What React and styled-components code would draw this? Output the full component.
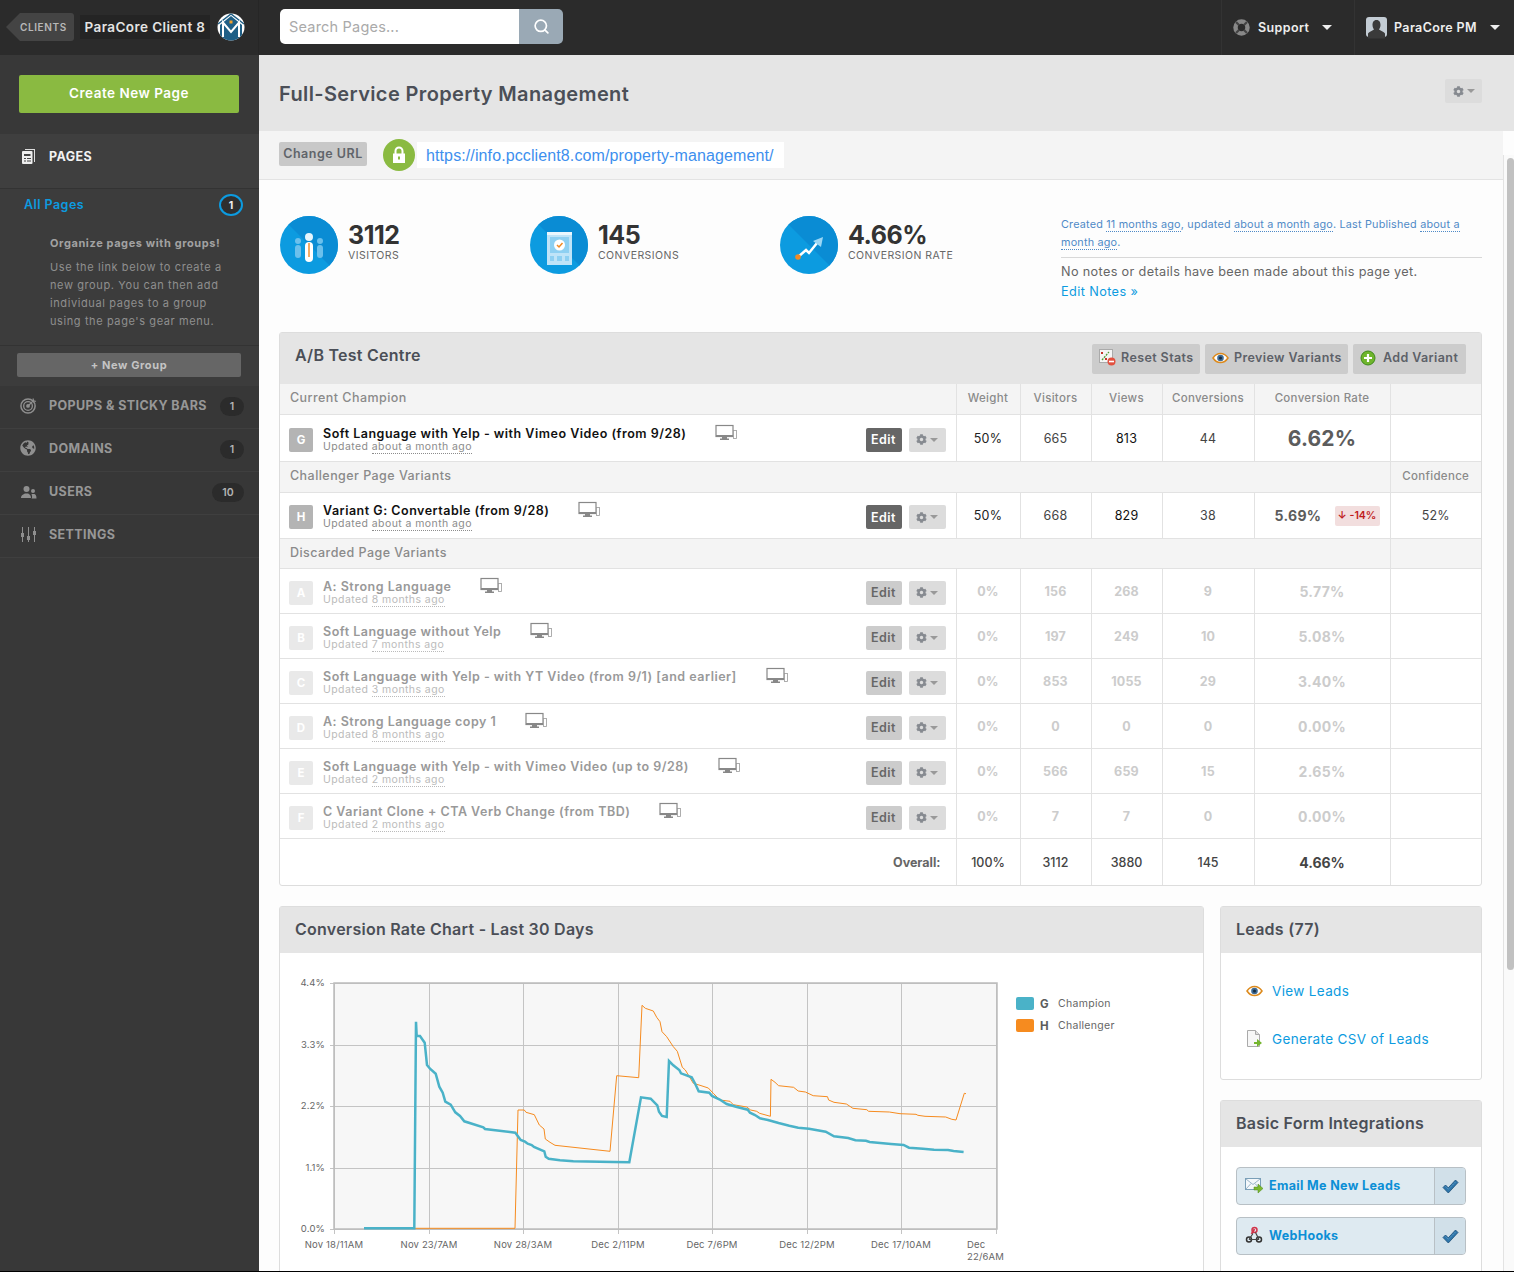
import React from "react";
import styled, { createGlobalStyle } from "styled-components";
import { FaCog, FaGlobeAmericas } from "react-icons/fa";
import { Search } from "lucide-react";

const FONT = `Inter, "Open Sans", "Liberation Sans", sans-serif`;

const GlobalStyle = createGlobalStyle`
  html, body {
    margin: 0;
    height: 1272px;
    overflow: hidden;
    background: #000;
    font-family: ${FONT};
  }
  #root { height: 1271px; overflow: hidden; }
  * { box-sizing: border-box; }
`;

const Page = styled.div`
  height: 1271px;
  display: flex;
  flex-direction: column;
  background: #fdfdfd;
`;

/* top bar */
const TopBar = styled.header`
  height: 55px;
  flex: none;
  display: flex;
  align-items: center;
  background: #2b2b2b;
  color: #fff;
`;
const Brand = styled.div`
  width: 259px;
  height: 100%;
  flex: none;
  display: flex;
  align-items: center;
  padding-left: 6px;
  border-right: 1px solid #262626;
`;
const ClientsTag = styled.div`
  width: 68px;
  height: 28px;
  margin-top: -1px;
  padding-left: 14px;
  display: flex;
  align-items: center;
  background: #444;
  border-radius: 0 3px 3px 0;
  color: #b8b8b8;
  font-size: 10px;
  font-weight: 600;
  letter-spacing: 0.6px;
  clip-path: polygon(14px 0, 100% 0, 100% 100%, 14px 100%, 0 50%);
`;
const ClientName = styled.div`
  margin-left: 6px;
  width: 130px;
  height: 24px;
  margin-top: -1px;
  display: flex;
  align-items: center;
  justify-content: center;
  background: #242424;
  font-size: 13.5px;
  font-weight: 600;
  letter-spacing: 0.4px;
  color: #e4e4e4;
  white-space: nowrap;
`;
const BrandLogo = styled.svg`
  width: 28px;
  height: 28px;
  margin-left: 7px;
  margin-top: -1px;
`;
const SearchBox = styled.div`
  margin-left: 21px;
  margin-top: -2px;
  width: 283px;
  height: 35px;
  display: flex;
  border-radius: 5px;
  overflow: hidden;
`;
const SearchField = styled.div`
  flex: 1;
  display: flex;
  align-items: center;
  padding-left: 9px;
  background: #fff;
  color: #aaa;
  font-size: 14.5px;
  letter-spacing: 0.2px;
`;
const SearchButton = styled.div`
  width: 44px;
  display: flex;
  align-items: center;
  justify-content: center;
  background: #9aa9b5;
  color: #fff;
`;
const TopMenu = styled.div`
  height: 100%;
  display: flex;
  align-items: center;
  border-left: 1px solid #333;
  padding-left: ${({ $pad }) => $pad}px;
  width: ${({ $w }) => $w}px;
  font-size: 12.5px;
  font-weight: 600;
  letter-spacing: 0.38px;
  color: #eee;
  margin-left: ${({ $push }) => ($push ? "auto" : "0")};
`;
const MenuLabel = styled.span`
  margin-left: ${({ $gap }) => $gap}px;
`;
const MenuCaret = styled.span`
  margin-left: ${({ $gap }) => $gap}px;
  border-left: 5px solid transparent;
  border-right: 5px solid transparent;
  border-top: 5px solid #eee;
`;

/* layout */
const Body = styled.div`
  flex: 1;
  min-height: 0;
  display: flex;
`;
const Sidebar = styled.aside`
  width: 259px;
  flex: none;
  background: #383838;
  display: flex;
  flex-direction: column;
`;
const Main = styled.main`
  flex: 1;
  min-width: 0;
  display: flex;
  flex-direction: column;
`;

/* sidebar */
const CreateArea = styled.div`
  height: 79px;
  padding: 20px 20px 0 19px;
`;
const CreateButton = styled.div`
  height: 38px;
  border-radius: 2px;
  background: #8aba41;
  color: #fff;
  display: flex;
  align-items: center;
  justify-content: center;
  padding-bottom: 2px;
  font-size: 13.5px;
  font-weight: 600;
  letter-spacing: 0.5px;
`;
const PagesHead = styled.div`
  height: 55px;
  background: #3f3f3f;
  border-bottom: 1px solid #333;
  display: flex;
  align-items: center;
  padding: 0 0 9px 20px;
  color: #f2f2f2;
  font-size: 12.5px;
  font-weight: 700;
  letter-spacing: 0.4px;
`;
const NavIcon = styled.svg`
  width: 17px;
  height: 17px;
  flex: none;
  margin-right: ${({ $gap }) => $gap || 12}px;
`;
const GlobeSlot = styled.span`
  width: 17px;
  height: 17px;
  flex: none;
  margin-right: 12px;
  color: #8f8f8f;
  font-size: 16px;
  line-height: 16px;
`;
const GroupSection = styled.div`
  height: 157px;
  background: #3c3c3c;
  border-bottom: 1px solid #333;
  position: relative;
  padding: 8px 0 0 24px;
`;
const AllPages = styled.div`
  color: #0c9be0;
  font-size: 12.5px;
  font-weight: 600;
  letter-spacing: 0.45px;
`;
const Ring = styled.div`
  position: absolute;
  top: 5px;
  right: 16px;
  width: 24px;
  height: 22px;
  border: 2px solid #0c9be0;
  border-radius: 50%;
  background: #2f2f2f;
  color: #eee;
  font-size: 10.5px;
  font-weight: 700;
  display: flex;
  align-items: center;
  justify-content: center;
`;
const HintTitle = styled.div`
  margin: 24px 0 0 26px;
  font-size: 11px;
  font-weight: 700;
  letter-spacing: 0.6px;
  color: #a2a2a2;
  white-space: nowrap;
`;
const HintText = styled.div`
  margin: 8px 0 0 26px;
  font-size: 11px;
  line-height: 18px;
  color: #8f8f8f;
  letter-spacing: 0.6px;
  white-space: nowrap;
`;
const NewGroupArea = styled.div`
  height: 40px;
  padding: 7px 18px 0 17px;
  background: #3c3c3c;
`;
const NewGroupButton = styled.div`
  height: 24px;
  border-radius: 2px;
  background: #666;
  color: #c4c4c4;
  display: flex;
  align-items: center;
  justify-content: center;
  font-size: 11px;
  font-weight: 700;
  letter-spacing: 0.6px;
`;
const NavRow = styled.div`
  height: 43px;
  flex: none;
  display: flex;
  align-items: center;
  padding: 0 15px 3px 20px;
  border-bottom: 1px solid #3f3f3f;
  background: #373737;
  color: #979797;
  font-size: 12.5px;
  font-weight: 700;
  letter-spacing: 0.4px;
`;
const NavCount = styled.span`
  margin-left: auto;
  margin-bottom: -2px;
  min-width: ${({ $wide }) => ($wide ? 32 : 24)}px;
  height: 19px;
  border-radius: 10px;
  background: #2b2b2b;
  color: #b4b4b4;
  font-size: 10.5px;
  font-weight: 600;
  letter-spacing: 0;
  display: flex;
  align-items: center;
  justify-content: center;
`;

/* page head */
const TitleBar = styled.div`
  height: 76px;
  flex: none;
  display: flex;
  align-items: center;
  justify-content: space-between;
  padding: 0 32px 0 20px;
  background: #e5e5e5;
`;
const PageTitle = styled.h1`
  margin: 2px 0 0;
  font-size: 20px;
  font-weight: 600;
  color: #4b4f57;
  letter-spacing: 0.37px;
`;
const GearButton = styled.div`
  width: ${({ $w }) => $w}px;
  height: 24px;
  flex: none;
  border-radius: 2px;
  background: ${({ $bg }) => $bg};
  color: #868a90;
  display: flex;
  align-items: center;
  justify-content: center;
  gap: 3px;
  font-size: 11px;
`;
const TitleGear = styled(GearButton)`
  margin-top: -4px;
`;
const SmallCaret = styled.span`
  border-left: 4px solid transparent;
  border-right: 4px solid transparent;
  border-top: 4px solid #999;
`;
const ContentRow = styled.div`
  flex: 1;
  min-height: 0;
  display: flex;
`;
const Content = styled.div`
  flex: 1;
  min-width: 0;
  overflow: hidden;
`;
const Scrollbar = styled.div`
  width: 11px;
  flex: none;
  margin-top: 24px;
  padding: 3px 0 0 3px;
  border-left: 1px solid #e3e3e3;
  background: #fafafa;
`;
const ScrollThumb = styled.div`
  height: 812px;
  border-radius: 4px;
  background: #c1c1c1;
`;
const UrlBar = styled.div`
  height: 49px;
  display: flex;
  align-items: center;
  padding: 0 0 1px 20px;
  background: #f4f4f4;
  border-bottom: 1px solid #e3e3e3;
`;
const ChangeUrl = styled.div`
  width: 88px;
  height: 24px;
  margin-top: -2px;
  border-radius: 2px;
  background: #c8c8c8;
  color: #60646a;
  display: flex;
  align-items: center;
  justify-content: center;
  font-size: 12.5px;
  font-weight: 600;
  letter-spacing: 0.5px;
`;
const LockCircle = styled.div`
  width: 32px;
  height: 32px;
  margin-left: 16px;
  border-radius: 50%;
  background: #8aba41;
  display: flex;
  align-items: center;
  justify-content: center;
`;
const UrlLink = styled.div`
  height: 26px;
  margin-left: 2px;
  padding: 3px 10px 0 9px;
  display: flex;
  align-items: center;
  background: #fff;
  color: #3d8fee;
  font-family: "Liberation Sans", sans-serif;
  font-size: 16px;
  letter-spacing: 0.11px;
`;

/* stats */
const StatsRow = styled.section`
  display: flex;
  padding: 36px 21px 0 21px;
  height: 152px;
`;
const Stat = styled.div`
  width: 250px;
  display: flex;
  flex: none;
`;
const StatIcon = styled.svg`
  width: 58px;
  height: 58px;
  flex: none;
`;
const StatText = styled.div`
  margin-left: 10px;
`;
const StatNumber = styled.div`
  font-size: 25px;
  line-height: 30px;
  margin-top: 4px;
  font-weight: 700;
  color: #333;
  letter-spacing: -0.5px;
`;
const StatLabel = styled.div`
  font-size: 10.5px;
  color: #666;
  margin-top: -1px;
  letter-spacing: 0.45px;
`;
const MetaBox = styled.div`
  flex: 1;
  margin-left: 31px;
`;
const MetaLine = styled.div`
  font-size: 10.8px;
  line-height: 18px;
  color: #4f8ac7;
  padding-bottom: 5px;
  border-bottom: 1px solid #d8d8d8;
  letter-spacing: 0.2px;
`;
const Abbr = styled.span`
  border-bottom: 1px dotted currentColor;
`;
const NoteLine = styled.div`
  margin-top: 5px;
  font-size: 12.7px;
  line-height: 18px;
  color: #666;
  letter-spacing: 0.34px;
`;
const NotesLink = styled.div`
  margin-top: 2px;
  font-size: 12.7px;
  line-height: 18px;
  color: #0c9be0;
  letter-spacing: 0.4px;
`;

/* panels */
const Panel = styled.section`
  border: 1px solid #ddd;
  border-radius: 3px;
  background: #fff;
`;
const TestPanel = styled(Panel)`
  margin: 0 21px 0 20px;
`;
const PanelHead = styled.div`
  height: ${({ $h }) => $h || 46}px;
  display: flex;
  align-items: center;
  padding: 0 15px;
  background: #e5e5e5;
`;
const PanelTitle = styled.h2`
  margin: 0;
  font-size: 16px;
  font-weight: 600;
  color: #4b4f57;
  letter-spacing: 0.25px;
  padding-bottom: ${({ $lift }) => $lift || 3}px;
`;
const HeadActions = styled.div`
  margin-left: auto;
  display: flex;
  gap: 5px;
  padding-top: 1px;
`;
const HeadButton = styled.div`
  height: 30px;
  width: ${({ $w }) => $w}px;
  border-radius: 2px;
  background: #ccc;
  color: #5d6168;
  display: flex;
  align-items: center;
  gap: ${({ $gap }) => $gap}px;
  padding: 0 0 3px 7px;
  font-size: 12.5px;
  font-weight: 600;
  letter-spacing: 0.4px;
`;
const Table = styled.table`
  width: 1201px;
  table-layout: fixed;
  border-collapse: collapse;
`;
const HeadCell = styled.td`
  height: ${({ $h }) => $h || 31}px;
  padding: 0 0 2px;
  background: #f4f4f4;
  border-bottom: 1px solid #e2e2e2;
  border-left: ${({ $first }) => ($first ? "0" : "1px solid #e2e2e2")};
  color: #8a8a8a;
  font-weight: 500;
  text-align: ${({ $first }) => ($first ? "left" : "center")};
  padding-left: ${({ $first }) => ($first ? "10px" : "0")};
  font-size: ${({ $first }) => ($first ? "12.5px" : "11.5px")};
  letter-spacing: ${({ $first }) => ($first ? "0.45px" : "0.3px")};
`;
const ValueCell = styled.td`
  height: ${({ $h }) => $h}px;
  padding: 1px 0 0;
  border-bottom: 1px solid #e2e2e2;
  border-left: 1px solid #e2e2e2;
  text-align: center;
  font-size: 12.5px;
  letter-spacing: 0.2px;
  font-weight: ${({ $dim }) => ($dim ? 700 : 400)};
  color: ${({ $dim, $c }) => ($dim ? "#ccc" : $c || "#444")};
`;
const NameCell = styled.td`
  padding: 4px 10px 0 9px;
  border-bottom: 1px solid #e2e2e2;
`;
const NameWrap = styled.div`
  display: flex;
  align-items: center;
`;
const Letter = styled.div`
  width: 24px;
  height: 24px;
  flex: none;
  border-radius: 2px;
  background: ${({ $dim }) => ($dim ? "#e9e9e9" : "#b4b4b4")};
  color: #fff;
  font-size: 11.5px;
  font-weight: 700;
  display: flex;
  align-items: center;
  justify-content: center;
`;
const NameText = styled.div`
  margin-left: 10px;
  display: flex;
  flex-direction: column;
`;
const VariantTitle = styled.div`
  font-size: 12.5px;
  line-height: 14px;
  font-weight: 600;
  letter-spacing: 0.5px;
  color: ${({ $dim }) => ($dim ? "#999" : "#111")};
  white-space: nowrap;
`;
const Updated = styled.div`
  font-size: 10.5px;
  line-height: 12px;
  letter-spacing: 0.42px;
  color: ${({ $dim }) => ($dim ? "#bbb" : "#8c8c8c")};
`;
const Device = styled.svg`
  width: 22px;
  height: 18px;
  flex: none;
  margin-left: 29px;
  margin-top: -14px;
`;
const EditButton = styled.div`
  margin-left: auto;
  width: 36px;
  height: 24px;
  border-radius: 2px;
  background: ${({ $dim }) => ($dim ? "#ccc" : "#666")};
  color: ${({ $dim }) => ($dim ? "#666" : "#fff")};
  font-size: 12.5px;
  font-weight: 600;
  letter-spacing: 0.5px;
  display: flex;
  align-items: center;
  justify-content: center;
`;
const RowGear = styled(GearButton)`
  margin-left: 7px;
  width: 37px;
`;
const BigRate = styled.span`
  font-size: 21px;
  font-weight: 700;
  color: #5c5c5c;
`;
const Rate = styled.span`
  font-size: 14px;
  font-weight: 700;
  letter-spacing: 0.3px;
  color: ${({ $dim }) => ($dim ? "#ccc" : "#5c5c5c")};
`;
const RateWrap = styled.div`
  display: flex;
  align-items: center;
  padding-left: 20px;
`;
const DropBadge = styled.span`
  margin-left: auto;
  margin-right: 10px;
  width: 45px;
  height: 20px;
  border-radius: 2px;
  background: #f2dede;
  color: #c01a1a;
  font-size: 10.5px;
  font-weight: 600;
  letter-spacing: 0;
  display: flex;
  align-items: center;
  justify-content: center;
`;
const OverallLabel = styled.td`
  text-align: right;
  padding: 2px 15px 0 0;
  font-size: 12.5px;
  font-weight: 700;
  color: #666;
`;
const OverallCell = styled.td`
  height: 47px;
  padding: 2px 0 0;
  border-left: 1px solid #e2e2e2;
  text-align: center;
  font-weight: ${({ $bold }) => ($bold ? 700 : 500)};
  font-size: ${({ $bold }) => ($bold ? "14px" : "12.5px")};
  color: #444;
`;

/* lower area */
const Lower = styled.div`
  display: grid;
  grid-template-columns: 925px 262px;
  column-gap: 16px;
  margin: 20px 21px 0 20px;
  align-items: start;
`;
const ChartBody = styled.div`
  display: flex;
  padding: 17px 0 0 10px;
  height: 330px;
`;
const ChartSvg = styled.svg`
  width: 720px;
  height: 310px;
  flex: none;
  overflow: visible;
`;
const ChartLabels = styled.g`
  font-family: ${FONT};
  font-size: 9.5px;
  letter-spacing: 0.15px;
  fill: #666;
`;
const Legend = styled.div`
  margin: 27px 0 0 6px;
  display: flex;
  flex-direction: column;
  gap: 9px;
`;
const LegendRow = styled.div`
  display: flex;
  align-items: center;
  height: 13px;
  font-size: 10.5px;
  letter-spacing: 0.3px;
  color: #666;
`;
const Swatch = styled.span`
  width: 18px;
  height: 13px;
  border-radius: 2px;
  background: ${({ $c }) => $c};
`;
const LegendKey = styled.b`
  width: 18px;
  margin-left: 6px;
  font-size: 11.5px;
  color: #5c5c5c;
`;
const SideStack = styled.div`
  display: flex;
  flex-direction: column;
  gap: 20px;
`;
const LeadsBody = styled.div`
  height: 126px;
  padding: 27px 0 0 25px;
  display: flex;
  flex-direction: column;
  gap: 27px;
`;
const LeadLink = styled.div`
  display: flex;
  align-items: center;
  height: 21px;
  color: #0c9be0;
  font-size: 13.5px;
  letter-spacing: 0.35px;
`;
const LeadIcon = styled.svg`
  width: 17px;
  height: 17px;
  flex: none;
  margin-right: 9px;
`;
const EyeSlot = styled.span`
  width: 17px;
  height: 17px;
  flex: none;
  margin-right: 9px;
  display: flex;
  align-items: center;
`;
const IntegrationBody = styled.div`
  padding: 20px 15px 20px 15px;
  display: flex;
  flex-direction: column;
  gap: 12px;
`;
const IntegrationRow = styled.div`
  height: 38px;
  display: flex;
  border: 1px solid #b8c0c5;
  border-radius: 4px;
  background: #deeaf1;
  overflow: hidden;
`;
const IntegrationName = styled.div`
  flex: 1;
  display: flex;
  align-items: center;
  padding: 0 0 2px 8px;
  color: #0c8fd6;
  font-size: 12.5px;
  font-weight: 700;
  letter-spacing: 0.35px;
`;
const IntegrationCheck = styled.div`
  width: 31px;
  display: flex;
  align-items: center;
  justify-content: center;
  background: #d1e0e9;
  border-left: 1px solid #b8c0c5;
`;
const ScaledIcon = styled.svg`
  width: 18px;
  height: 18px;
  flex: none;
  margin-right: 6px;
`;

/* drawings */
const Logo = () => (
  <BrandLogo viewBox="0 0 28 28">
    <defs>
      <clipPath id="logoClip"><circle cx="14" cy="14" r="13.5" /></clipPath>
    </defs>
    <g clipPath="url(#logoClip)">
      <rect width="28" height="28" fill="#fff" />
      <path d="M3 12 14 3l11 9v12H3z" fill="#1f5f86" />
      <path d="M1 11 14 1l13 10" fill="none" stroke="#1f5f86" strokeWidth="1.5" />
      <path d="M6 24V9.5l8 9.5 8-9.5V24" fill="none" stroke="#fff" strokeWidth="2" />
      <rect x="12.5" y="7.5" width="3" height="3" fill="#f0a02e" />
      <rect y="24" width="28" height="4" fill="#1f5f86" />
    </g>
  </BrandLogo>
);

const LockIcon = () => (
  <svg width="14" height="18" viewBox="0 0 14 18">
    <path d="M3.500 8V5a3.500 3.500 0 0 1 7 0v3" fill="none" stroke="#fff" strokeWidth="2" />
    <path d="M1 7.500h12V17H1zM6 10.500v3h2v-3z" fill="#fff" fillRule="evenodd" />
  </svg>
);

const LifeBuoy = () => (
  <svg width="17" height="17" viewBox="0 0 17 17">
    <circle cx="8.5" cy="8.5" r="6" fill="none" stroke="#888" strokeWidth="4.5" />
    <path d="M3 3l3 3M14 3l-3 3M3 14l3-3M14 14l-3-3" stroke="#444" strokeWidth="2.2" />
  </svg>
);

const Avatar = () => (
  <svg width="21" height="22" viewBox="0 0 21 22">
    <rect width="21" height="20" rx="3" fill="#c3ccd4" />
    <path d="M10.5 3c3 0 4 2.500 4 5 0 2-1 3.500-1.500 4.500 1 1 5 2 6 4v5H2v-5c1-2 5-3 6-4-.5-1-1.500-2.500-1.500-4.500 0-2.500 1-5 4-5z" fill="#3a3a3a" />
  </svg>
);

const PagesIcon = () => (
  <NavIcon viewBox="0 0 17 17">
    <path d="M5 1h9v1H5zM14 1h1v13h-1z" fill="#ddd" />
    <rect x="2" y="3" width="10.500" height="13" rx="1" fill="#eee" />
    <path d="M4 6h6.500v2H4zM4 10h2v1H4zM7 10h4v1H7zM4 12.500h2v1H4zM7 12.500h4v1H7z" fill="#444" />
  </NavIcon>
);

const TargetIcon = () => (
  <NavIcon viewBox="0 0 18 18">
    <circle cx="8.500" cy="9.500" r="7.500" fill="none" stroke="#8f8f8f" strokeWidth="1.600" />
    <circle cx="8.500" cy="9.500" r="4.600" fill="none" stroke="#8f8f8f" strokeWidth="1.400" />
    <circle cx="8.500" cy="9.500" r="2" fill="#8f8f8f" />
    <path d="M8.500 9.500 15 3M14 1.500v3h3" fill="none" stroke="#8f8f8f" strokeWidth="1.300" />
  </NavIcon>
);

const UsersIcon = () => (
  <NavIcon viewBox="0 0 17 17">
    <circle cx="6.500" cy="6" r="3" fill="#8f8f8f" />
    <path d="M1 15c0-3 2.500-3.500 4-4.500h3c1.500 1 3 1.500 3 4.500z" fill="#8f8f8f" />
    <circle cx="13" cy="8" r="2" fill="#8f8f8f" />
    <path d="M11.500 15.500c1-.5.500-3 0-4.500h3c1 .5 2 1.500 2 4.500z" fill="#8f8f8f" />
  </NavIcon>
);

const SlidersIcon = () => (
  <NavIcon viewBox="0 0 17 17">
    <path d="M2.500 1v15M8.500 1v15M14.500 1v15" stroke="#8f8f8f" strokeWidth="1" />
    <rect x="1" y="7" width="3" height="4" fill="#8f8f8f" />
    <rect x="7" y="10" width="3" height="4" fill="#8f8f8f" />
    <rect x="13" y="5" width="3" height="4" fill="#8f8f8f" />
  </NavIcon>
);

const StatDisc = ({ id, children }) => (
  <StatIcon viewBox="0 0 58 58">
    <defs>
      <clipPath id={id}><circle cx="29" cy="29" r="29" /></clipPath>
    </defs>
    <circle cx="29" cy="29" r="29" fill="#0c9be0" />
    <path d="M0 0h58v58z" fill="#0a8cd4" clipPath={`url(#${id})`} />
    {children}
  </StatIcon>
);

const VisitorsIcon = () => (
  <StatDisc id="discA">
    <circle cx="18" cy="25" r="3" fill="#6cc0ec" />
    <rect x="15" y="29" width="6" height="13" rx="3" fill="#6cc0ec" />
    <circle cx="40" cy="25" r="3" fill="#6cc0ec" />
    <rect x="37" y="29" width="6" height="13" rx="3" fill="#6cc0ec" />
    <circle cx="29" cy="21" r="4" fill="#e6f5fd" />
    <rect x="25" y="26" width="8" height="20" rx="4" fill="#fff" />
    <path d="M29 27v14" stroke="#f08a24" strokeWidth="1.400" />
  </StatDisc>
);

const ConversionsIcon = () => (
  <StatDisc id="discB">
    <rect x="17" y="16" width="25" height="33" fill="#bfe4f8" />
    <rect x="17" y="16" width="25" height="3" fill="#eaf7fe" />
    <rect x="20" y="21" width="19" height="16" fill="#8ed0f2" />
    <circle cx="29.500" cy="29" r="5.500" fill="#fff" />
    <path d="M27 29l2 2 3.500-4" fill="none" stroke="#f08a24" strokeWidth="1.500" />
    <path d="M20 40h4v5h-4zM27 40h5v5h-5zM35 40h4v5h-4z" fill="#8ed0f2" />
  </StatDisc>
);

const RateIcon = () => (
  <StatDisc id="discC">
    <path d="M18 41l8-7 3 3 8-10" fill="none" stroke="#fff" strokeWidth="2.500" />
    <path d="M33 25l10-4-2 10z" fill="#9bd6f5" />
    <circle cx="18" cy="41" r="2.800" fill="#f08a24" />
  </StatDisc>
);

const DeviceIcon = () => (
  <Device viewBox="0 0 22 18">
    <rect x="1" y="1.500" width="17" height="11" fill="none" stroke="#888" strokeWidth="1.200" />
    <rect x="1" y="11" width="17" height="2" fill="#888" />
    <path d="M7 13h5v1.500h2V16H5v-1.500h2z" fill="#888" />
    <rect x="18.500" y="6.500" width="3" height="8" fill="#fff" stroke="#999" strokeWidth=".8" />
  </Device>
);

const EyeIcon = () => (
  <svg width="17" height="12" viewBox="0 0 17 12">
    <path d="M1 6c2-3 5-4.500 7.500-4.500S14 3 16 6c-2 3-5 4.500-7.500 4.500S3 9 1 6z" fill="#fff" stroke="#dd8a1c" strokeWidth="1.500" />
    <circle cx="8.500" cy="6" r="3.300" fill="#3e6b96" />
    <circle cx="8.500" cy="6" r="1.500" fill="#15293c" />
  </svg>
);

const ResetIcon = () => (
  <svg width="17" height="17" viewBox="0 0 17 17">
    <rect x=".5" y=".5" width="13" height="13" fill="#f5f5f5" stroke="#aaa" />
    <path d="M3 11 10 3" stroke="#4f9a34" strokeWidth="1.200" strokeDasharray="2 1" />
    <path d="M2 3l2 2M4 3 2 5M6 9l2 2M8 9l-2 2" stroke="#c5352c" strokeWidth="1" />
    <circle cx="12.500" cy="12.500" r="4" fill="#e2503f" />
    <rect x="10" y="11.700" width="5" height="1.600" fill="#fff" />
  </svg>
);

const AddIcon = () => (
  <svg width="16" height="16" viewBox="0 0 16 16">
    <circle cx="8" cy="8" r="7" fill="#6fb52c" stroke="#3f8a1c" />
    <path d="M4 8h8M8 4v8" stroke="#fff" strokeWidth="2.200" />
  </svg>
);

const CsvIcon = () => (
  <LeadIcon viewBox="0 0 17 17">
    <path d="M1.500.5h8l4 4v12h-12z" fill="#f7f7f7" stroke="#aaa" />
    <path d="M9.500.5v4h4" fill="#ddd" stroke="#aaa" />
    <path d="M8 12h3V9l5 4-5 3.800V14H8z" fill="#74b52d" />
  </LeadIcon>
);

const MailIcon = () => (
  <ScaledIcon viewBox="0 0 18 18">
    <rect x=".5" y="2.500" width="15" height="11" fill="#f4f8fb" stroke="#7a9fb8" />
    <path d="M1 3l7 5.500L15 3M1 13l5-5.500M15 13l-5-5.500" fill="none" stroke="#9bb6c9" />
    <path d="M9 11h4V8l5 4.500-5 4.500v-3H9z" fill="#7cb82f" stroke="#4f8a1c" strokeWidth=".5" />
  </ScaledIcon>
);

const HookIcon = () => (
  <ScaledIcon viewBox="0 0 18 18">
    <path d="M6.500 8 9.500 3" stroke="#d2344a" strokeWidth="1.800" fill="none" />
    <circle cx="9.500" cy="4" r="2.500" fill="none" stroke="#d2344a" strokeWidth="1.500" />
    <circle cx="4" cy="13.500" r="2.500" fill="none" stroke="#333" strokeWidth="1.500" />
    <circle cx="14" cy="13.500" r="2.500" fill="none" stroke="#333" strokeWidth="1.500" />
    <path d="M4 13.500h10M4 13.500l4-6M14 13.500l-3.500-7" stroke="#444" strokeWidth="1.200" fill="none" />
  </ScaledIcon>
);

const CheckMark = () => (
  <svg width="17" height="15" viewBox="0 0 17 15">
    <path d="M1 8.500 3.500 6l2.800 2.800L13.500 1 16 3.500 6.300 14z" fill="#2d76ab" stroke="#1d4f78" strokeWidth=".8" />
    <path d="M3.500 7.500l2.800 2.800L14 2.500" fill="none" stroke="#6fa5cb" strokeWidth=".8" strokeDasharray="1.500 1" />
  </svg>
);

/* chart traces, in page pixels */
const CHAMPION = "364,1228.3 414.3,1228.3 416,1021.7 416.7,1036 420,1036 424.7,1042.7 427,1065 430,1068.7 435.7,1073.7 439.3,1086.7 442.7,1092.7 445.3,1101.7 450.7,1104.7 455.3,1112.3 460,1116 464.3,1121.3 483.3,1127.3 485,1129 515.3,1132.7 520.7,1140 525,1141.7 527.7,1143.7 531.7,1145 534,1147 544.3,1151.3 545.7,1156.7 548.7,1158.7 560,1160.3 573.3,1161.3 613.3,1162 629.3,1162.3 641,1097.3 650.7,1098.7 657.3,1105.3 659,1111.7 662,1116 666.7,1117 669,1061 673.3,1065.3 679.3,1070 681,1073.3 691.7,1077.3 695.3,1084 698.7,1091.3 709.3,1092.7 712,1096 719.3,1099.3 726.7,1104 736,1106.7 747.7,1109.7 750,1112.7 755,1115 760,1118.3 767.9,1120 778.6,1123 789.3,1125.7 798.2,1127.7 809,1128.7 825.7,1131.7 834,1136.3 848.2,1138 855.4,1140.3 866,1140.7 869.6,1142 891,1144 903.6,1145 909,1147.7 923,1148.7 934,1149.7 948,1150 953.6,1151 963.6,1152";
const CHALLENGER = "364,1228.3 515,1228.3 518,1110 524.3,1110 526,1112.3 534.3,1114.7 539.3,1125 544,1129 545.3,1139 550,1142.3 555,1145.3 610,1151.3 616.7,1075.7 638.7,1077.7 642,1005.3 645.3,1008.3 653.3,1011 656.7,1017.3 660,1021.7 662,1031.7 666.7,1036.7 673.3,1046.7 677.3,1051.3 682.3,1067.3 685.3,1070 693.3,1083.3 700,1085.3 708.3,1088 713.3,1093.3 720,1100 730,1101.3 733.3,1104.7 746.7,1107 750.7,1110 756.7,1111.3 759.6,1113.3 770.4,1116.3 771,1079.3 775,1082.3 778.6,1085.7 793.6,1087.3 798.2,1091 805.4,1092 813.2,1095.7 827.5,1096.7 828.6,1100 834,1102.3 846.4,1104 852.9,1108.3 866.8,1109.7 868.6,1111.3 889.3,1112 900,1113.7 916,1114.3 917.9,1115.3 925,1116.3 945.7,1117 951.8,1119.3 956,1120 964.3,1093.3 966,1093.7";

const Y_TICKS = [
  ["4.4%", 983],
  ["3.3%", 1045],
  ["2.2%", 1106],
  ["1.1%", 1168],
  ["0.0%", 1229],
];
const X_TICKS = [
  ["Nov 18/11AM", 334],
  ["Nov 23/7AM", 429],
  ["Nov 28/3AM", 523],
  ["Dec 2/11PM", 618],
  ["Dec 7/6PM", 712],
  ["Dec 12/2PM", 807],
  ["Dec 17/10AM", 901],
];

const Chart = () => (
  <ChartSvg viewBox="290 970 720 310">
    <rect x="334" y="983" width="663" height="246" fill="#f7f7f7" />
    {Y_TICKS.map(([, y]) => (
      <path key={y} d={`M330 ${y + 0.5}H997`} stroke="#c4c4c4" strokeWidth="1" />
    ))}
    {X_TICKS.map(([, x]) => (
      <path key={x} d={`M${x + 0.5} 983V1234`} stroke="#c4c4c4" strokeWidth="1" />
    ))}
    <path d="M996.500 983V1234" stroke="#c4c4c4" strokeWidth="1" />
    <rect x="334" y="983" width="663" height="246" fill="none" stroke="#bcbcbc" strokeWidth="1.500" />
    <polyline points={CHALLENGER} fill="none" stroke="#f68b1f" strokeWidth="1" />
    <polyline points={CHAMPION} fill="none" stroke="#4ab2c8" strokeWidth="2.500" />
    <ChartLabels>
      {Y_TICKS.map(([label, y]) => (
        <text key={label} x="325" y={y + 3} textAnchor="end">{label}</text>
      ))}
      {X_TICKS.map(([label, x]) => (
        <text key={label} x={x} y="1248" textAnchor="middle">{label}</text>
      ))}
      <text x="967" y="1248">Dec</text>
      <text x="967" y="1260">22/6AM</text>
    </ChartLabels>
  </ChartSvg>
);

const DISCARDED = [
  ["A", "A: Strong Language", "8 months ago", "156", "268", "9", "5.77%"],
  ["B", "Soft Language without Yelp", "7 months ago", "197", "249", "10", "5.08%"],
  ["C", "Soft Language with Yelp - with YT Video (from 9/1) [and earlier]", "3 months ago", "853", "1055", "29", "3.40%"],
  ["D", "A: Strong Language copy 1", "8 months ago", "0", "0", "0", "0.00%"],
  ["E", "Soft Language with Yelp - with Vimeo Video (up to 9/28)", "2 months ago", "566", "659", "15", "2.65%"],
  ["F", "C Variant Clone + CTA Verb Change (from TBD)", "2 months ago", "7", "7", "0", "0.00%"],
];

const VariantName = ({ letter, title, ago, dim }) => (
  <NameCell>
    <NameWrap>
      <Letter $dim={dim}>{letter}</Letter>
      <NameText>
        <VariantTitle $dim={dim}>{title}</VariantTitle>
        <Updated $dim={dim}>Updated <Abbr>{ago}</Abbr></Updated>
      </NameText>
      <DeviceIcon />
      <EditButton $dim={dim}>Edit</EditButton>
      <RowGear $bg="#dcdcdc" $w={37}><FaCog /><SmallCaret /></RowGear>
    </NameWrap>
  </NameCell>
);

const App = () => (
  <Page>
    <GlobalStyle />
    <TopBar>
      <Brand>
        <ClientsTag>CLIENTS</ClientsTag>
        <ClientName>ParaCore Client 8</ClientName>
        <Logo />
      </Brand>
      <SearchBox>
        <SearchField>Search Pages...</SearchField>
        <SearchButton><Search size={17} strokeWidth={2.4} /></SearchButton>
      </SearchBox>
      <TopMenu $push $pad={11} $w={133}>
        <LifeBuoy />
        <MenuLabel $gap={8}>Support</MenuLabel>
        <MenuCaret $gap={13} />
      </TopMenu>
      <TopMenu $pad={11} $w={160}>
        <Avatar />
        <MenuLabel $gap={7}>ParaCore PM</MenuLabel>
        <MenuCaret $gap={13} />
      </TopMenu>
    </TopBar>
    <Body>
      <Sidebar>
        <CreateArea>
          <CreateButton>Create New Page</CreateButton>
        </CreateArea>
        <PagesHead><PagesIcon />PAGES</PagesHead>
        <GroupSection>
          <AllPages>All Pages</AllPages>
          <Ring>1</Ring>
          <HintTitle>Organize pages with groups!</HintTitle>
          <HintText>
            Use the link below to create a<br />
            new group. You can then add<br />
            individual pages to a group<br />
            using the page's gear menu.
          </HintText>
        </GroupSection>
        <NewGroupArea>
          <NewGroupButton>+ New Group</NewGroupButton>
        </NewGroupArea>
        <NavRow><TargetIcon />POPUPS &amp; STICKY BARS<NavCount>1</NavCount></NavRow>
        <NavRow>
          <GlobeSlot><FaGlobeAmericas /></GlobeSlot>
          DOMAINS<NavCount>1</NavCount>
        </NavRow>
        <NavRow><UsersIcon />USERS<NavCount $wide>10</NavCount></NavRow>
        <NavRow><SlidersIcon />SETTINGS</NavRow>
      </Sidebar>
      <Main>
        <TitleBar>
          <PageTitle>Full-Service Property Management</PageTitle>
          <TitleGear $bg="#dcdcdc" $w={37}><FaCog /><SmallCaret /></TitleGear>
        </TitleBar>
        <ContentRow>
          <Content>
            <UrlBar>
              <ChangeUrl>Change URL</ChangeUrl>
              <LockCircle><LockIcon /></LockCircle>
              <UrlLink>https://info.pcclient8.com/property-management/</UrlLink>
            </UrlBar>
            <StatsRow>
              <Stat>
                <VisitorsIcon />
                <StatText><StatNumber>3112</StatNumber><StatLabel>VISITORS</StatLabel></StatText>
              </Stat>
              <Stat>
                <ConversionsIcon />
                <StatText><StatNumber>145</StatNumber><StatLabel>CONVERSIONS</StatLabel></StatText>
              </Stat>
              <Stat>
                <RateIcon />
                <StatText><StatNumber>4.66%</StatNumber><StatLabel>CONVERSION RATE</StatLabel></StatText>
              </Stat>
              <MetaBox>
                <MetaLine>
                  Created <Abbr>11 months ago</Abbr>, updated <Abbr>about a month ago</Abbr>. Last Published <Abbr>about a</Abbr> <Abbr>month ago</Abbr>.
                </MetaLine>
                <NoteLine>No notes or details have been made about this page yet.</NoteLine>
                <NotesLink>Edit Notes »</NotesLink>
              </MetaBox>
            </StatsRow>
            <TestPanel>
              <PanelHead $h={51}>
                <PanelTitle $lift={7}>A/B Test Centre</PanelTitle>
                <HeadActions>
                  <HeadButton $w={108} $gap={5}><ResetIcon />Reset Stats</HeadButton>
                  <HeadButton $w={143} $gap={5}><EyeIcon />Preview Variants</HeadButton>
                  <HeadButton $w={113} $gap={7}><AddIcon />Add Variant</HeadButton>
                </HeadActions>
              </PanelHead>
              <Table>
                <colgroup>
                  <col style={{ width: 676 }} />
                  <col style={{ width: 64 }} />
                  <col style={{ width: 71 }} />
                  <col style={{ width: 71 }} />
                  <col style={{ width: 92 }} />
                  <col style={{ width: 136 }} />
                  <col style={{ width: 91 }} />
                </colgroup>
                <tbody>
                  <tr>
                    <HeadCell $first $h={30}>Current Champion</HeadCell>
                    <HeadCell $h={30}>Weight</HeadCell>
                    <HeadCell $h={30}>Visitors</HeadCell>
                    <HeadCell $h={30}>Views</HeadCell>
                    <HeadCell $h={30}>Conversions</HeadCell>
                    <HeadCell $h={30}>Conversion Rate</HeadCell>
                    <HeadCell $h={30} />
                  </tr>
                  <tr>
                    <VariantName letter="G" title="Soft Language with Yelp - with Vimeo Video (from 9/28)" ago="about a month ago" />
                    <ValueCell $h={47} $c="#222">50%</ValueCell>
                    <ValueCell>665</ValueCell>
                    <ValueCell $c="#111">813</ValueCell>
                    <ValueCell>44</ValueCell>
                    <ValueCell><BigRate>6.62%</BigRate></ValueCell>
                    <ValueCell />
                  </tr>
                  <tr>
                    <HeadCell $first colSpan={6}>Challenger Page Variants</HeadCell>
                    <HeadCell>Confidence</HeadCell>
                  </tr>
                  <tr>
                    <VariantName letter="H" title="Variant G: Convertable (from 9/28)" ago="about a month ago" />
                    <ValueCell $h={46} $c="#222">50%</ValueCell>
                    <ValueCell>668</ValueCell>
                    <ValueCell $c="#111">829</ValueCell>
                    <ValueCell>38</ValueCell>
                    <ValueCell>
                      <RateWrap><Rate>5.69%</Rate><DropBadge>↓ -14%</DropBadge></RateWrap>
                    </ValueCell>
                    <ValueCell>52%</ValueCell>
                  </tr>
                  <tr>
                    <HeadCell $first colSpan={6} $h={30}>Discarded Page Variants</HeadCell>
                    <HeadCell $h={30} />
                  </tr>
                  {DISCARDED.map(([letter, title, ago, visitors, views, conv, rate]) => (
                    <tr key={letter}>
                      <VariantName dim letter={letter} title={title} ago={ago} />
                      <ValueCell $h={45} $dim>0%</ValueCell>
                      <ValueCell $dim>{visitors}</ValueCell>
                      <ValueCell $dim>{views}</ValueCell>
                      <ValueCell $dim>{conv}</ValueCell>
                      <ValueCell><Rate $dim>{rate}</Rate></ValueCell>
                      <ValueCell />
                    </tr>
                  ))}
                  <tr>
                    <OverallLabel>Overall:</OverallLabel>
                    <OverallCell>100%</OverallCell>
                    <OverallCell>3112</OverallCell>
                    <OverallCell>3880</OverallCell>
                    <OverallCell>145</OverallCell>
                    <OverallCell $bold>4.66%</OverallCell>
                    <OverallCell />
                  </tr>
                </tbody>
              </Table>
            </TestPanel>
            <Lower>
              <Panel>
                <PanelHead><PanelTitle>Conversion Rate Chart - Last 30 Days</PanelTitle></PanelHead>
                <ChartBody>
                  <Chart />
                  <Legend>
                    <LegendRow><Swatch $c="#4ab2c8" /><LegendKey>G</LegendKey>Champion</LegendRow>
                    <LegendRow><Swatch $c="#f68b1f" /><LegendKey>H</LegendKey>Challenger</LegendRow>
                  </Legend>
                </ChartBody>
              </Panel>
              <SideStack>
                <Panel>
                  <PanelHead><PanelTitle>Leads (77)</PanelTitle></PanelHead>
                  <LeadsBody>
                    <LeadLink><EyeSlot><EyeIcon /></EyeSlot>View Leads</LeadLink>
                    <LeadLink><CsvIcon />Generate CSV of Leads</LeadLink>
                  </LeadsBody>
                </Panel>
                <Panel>
                  <PanelHead><PanelTitle>Basic Form Integrations</PanelTitle></PanelHead>
                  <IntegrationBody>
                    <IntegrationRow>
                      <IntegrationName><MailIcon />Email Me New Leads</IntegrationName>
                      <IntegrationCheck><CheckMark /></IntegrationCheck>
                    </IntegrationRow>
                    <IntegrationRow>
                      <IntegrationName><HookIcon />WebHooks</IntegrationName>
                      <IntegrationCheck><CheckMark /></IntegrationCheck>
                    </IntegrationRow>
                  </IntegrationBody>
                </Panel>
              </SideStack>
            </Lower>
          </Content>
          <Scrollbar><ScrollThumb /></Scrollbar>
        </ContentRow>
      </Main>
    </Body>
  </Page>
);

export default App;
